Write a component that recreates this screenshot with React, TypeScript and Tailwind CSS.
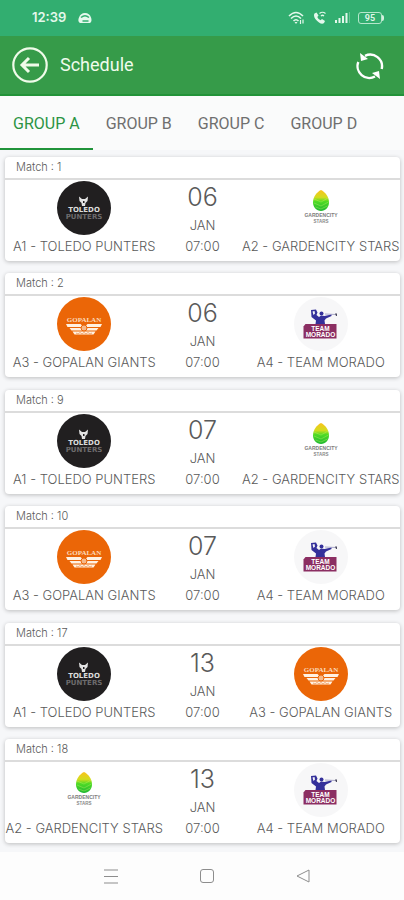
import { useState } from 'react';

type Team = 'toledo' | 'garden' | 'gopalan' | 'morado';

const teams: Record<Team, string> = {
  toledo: 'A1 - TOLEDO PUNTERS',
  garden: 'A2 - GARDENCITY STARS',
  gopalan: 'A3 - GOPALAN GIANTS',
  morado: 'A4 - TEAM MORADO',
};

const matches: { no: number; home: Team; away: Team; day: string }[] = [
  { no: 1, home: 'toledo', away: 'garden', day: '06' },
  { no: 2, home: 'gopalan', away: 'morado', day: '06' },
  { no: 9, home: 'toledo', away: 'garden', day: '07' },
  { no: 10, home: 'gopalan', away: 'morado', day: '07' },
  { no: 17, home: 'toledo', away: 'gopalan', day: '13' },
  { no: 18, home: 'garden', away: 'morado', day: '13' },
];

const groups = ['GROUP A', 'GROUP B', 'GROUP C', 'GROUP D'];

function ToledoLogo() {
  return (
    <svg className="size-[54px]" viewBox="0 0 54 54" aria-hidden="true">
      <circle cx="27" cy="27" r="27" fill="#211f20" />
      <path d="M22 15.500l3 2.500h3l3-2.500-.5 4.500-2 2-.5 3h-3l-.5-3-2-2z" fill="#e4e4e4" />
      <path d="M26 20h1.500v2H26z" fill="#211f20" />
      <text x="27" y="31" textAnchor="middle" fontSize="7" fontWeight="700" fontFamily="DejaVu Sans" fill="#dcdcdc">TOLEDO</text>
      <text x="27" y="38" textAnchor="middle" fontSize="7" fontWeight="700" fontFamily="DejaVu Sans" fill="#6d6b6c">PUNTERS</text>
    </svg>
  );
}

function GardenLogo() {
  return (
    <svg className="size-[54px]" viewBox="0 0 54 54" aria-hidden="true">
      <defs>
        <linearGradient id="leaf" x1="0" y1="0" x2="0" y2="1">
          <stop offset="0" stopColor="#fbc21c" />
          <stop offset=".35" stopColor="#d3dc1e" />
          <stop offset=".55" stopColor="#4fdb25" />
          <stop offset="1" stopColor="#1fb833" />
        </linearGradient>
      </defs>
      <path d="M27 9c4 2 8 6.500 8 12.500 0 4.500-3.500 8.500-8 8.500s-8-4-8-8.500C19 15.500 23 11 27 9z" fill="url(#leaf)" />
      <path d="M20 18l7 3 7-4M20 22l7 3 7.500-4M21.500 26l5.500 2 6.500-3" fill="none" stroke="#c9f56d" strokeWidth=".6" opacity=".6" />
      <text x="27" y="35.500" textAnchor="middle" fontSize="5" fontWeight="700" fontFamily="Liberation Sans" fill="#7d7d7d">GARDENCITY</text>
      <text x="27" y="42" textAnchor="middle" fontSize="4.500" fontWeight="700" fontFamily="Liberation Sans" fill="#888">STARS</text>
    </svg>
  );
}

function GopalanLogo() {
  return (
    <svg className="size-[54px]" viewBox="0 0 54 54" aria-hidden="true">
      <circle cx="27" cy="27" r="27" fill="#eb6607" />
      <text x="27" y="24.500" textAnchor="middle" fontSize="7" fontWeight="700" fontFamily="Liberation Serif" fill="#fbd9bb">GOPALAN</text>
      <path d="M9 27h14.500l1 1h5l1-1H45l-1.500 3H10.500zM12.500 31h29l-2 2.500h-25zM15.500 34.500h23l-2 3h-19z" fill="#fff1e2" />
      <circle cx="27" cy="31" r="3" fill="#f6b888" stroke="#eb6607" strokeWidth="1" />
      <path d="M19 36l2 1 2-1.500 2 1.500 2-1.500 2 1.500 2-1.500 2 1.500 2-1" fill="none" stroke="#eb8a45" strokeWidth=".7" />
    </svg>
  );
}

function MoradoLogo() {
  return (
    <svg className="size-[54px]" viewBox="0 0 54 54" aria-hidden="true">
      <circle cx="27" cy="27" r="27" fill="#f7f7f8" />
      <path d="M17 13l5-.5 1.500 3-1 2.500 2.500 2 2-1.500 3.500.5 7-1.500v1.500L32 21.500l-1.500 2 .5 3.500H21.500l.5-3.500-4.500-3.500z" fill="#34309a" />
      <path d="M18.500 14.500l2-.5.5 2.500-1.500 1.500z" fill="#f7f7f8" />
      <circle cx="27.500" cy="16.500" r="2" fill="#34309a" />
      <path d="M31 17l11 .5" stroke="#8886b4" strokeWidth=".7" />
      <path d="M41 16.500h2v2.500h-1z" fill="#4c4a5e" />
      <path d="M11.500 27h31v14.500h-33v-12z" fill="#8b2e62" />
      <text x="26.500" y="33.500" textAnchor="middle" fontSize="6.500" fontWeight="700" fontFamily="Liberation Sans" fill="#fff">TEAM</text>
      <text x="26.500" y="40" textAnchor="middle" fontSize="6.500" fontWeight="700" fontFamily="Liberation Sans" fill="#fff">MORADO</text>
    </svg>
  );
}

const logos = { toledo: ToledoLogo, garden: GardenLogo, gopalan: GopalanLogo, morado: MoradoLogo };

function TeamCell({ team }: { team: Team }) {
  const Logo = logos[team];
  return (
    <div className="flex flex-col items-center">
      <Logo />
      <span className="leading-[22px] whitespace-nowrap">{teams[team]}</span>
    </div>
  );
}

function StatusBar() {
  return (
    <div className="flex h-9 items-center justify-between bg-[#32ae70] pr-5 pl-8 text-[#e4f8ec]">
      <div className="flex items-center gap-3">
        <span className="font-['Inter',sans-serif] text-[13px] font-semibold">12:39</span>
        <svg width="14" height="12" viewBox="0 0 14 12" aria-hidden="true">
          <path d="M2 11C0 10 0 7.500 1 5.500 2 2.500 4 1 7 1s5 1.500 6 4.500c.8 2 .8 4.500-1 5.500z" fill="currentColor" />
          <path d="M3 5.500Q7 2 11 5.500M4.500 9h6" stroke="#32ae70" strokeWidth="1.500" fill="none" />
        </svg>
      </div>
      <div className="flex items-center gap-1">
        <svg width="17" height="14" viewBox="0 0 17 14" fill="none" stroke="currentColor" strokeWidth="1.600" aria-hidden="true">
          <path d="M1 5Q8 -2 15 5M3 7.500Q8 2.500 13 7.500M5.500 10Q8 7.500 10.500 10" />
          <path d="M6.500 11h3L8 13z" fill="currentColor" stroke="none" />
          <path d="M12.500 9v4M15 8.500v4" strokeWidth="1.200" />
        </svg>
        <svg className="ml-1" width="14" height="14" viewBox="0 0 14 14" aria-hidden="true">
          <path d="M1.500 2.500l2-1 2 3-1.200 1.500c.7 1.500 1.700 2.500 3.200 3.200L9 8l3 2-1 2c-1 1-3 1-5-.5C3 9.500 1 6.500 1 4.500c0-.8 0-1.500.5-2z" fill="currentColor" />
          <path d="M6.500 2.500Q9.500 0 12.500 2.500M8 5Q9.500 3.500 11 5" stroke="currentColor" strokeWidth="1.200" fill="none" />
        </svg>
        <svg className="ml-1" width="15" height="12" viewBox="0 0 15 12" fill="currentColor" aria-hidden="true">
          <path d="M0 8h2v3H0zM3.500 6h2v5h-2zM7 4h2v7H7zM10.500 1h2v10h-2z" />
          <path d="M14 0h1v11h-1z" opacity=".3" />
        </svg>
        <div className="ml-1 flex items-center">
          <span className="flex h-3 w-6 items-center justify-center rounded-[3px] border border-[#b5e6cb] text-[9px] leading-none font-semibold">95</span>
          <span className="h-1.5 w-0.5 rounded-r bg-[#d3f1e0]" />
        </div>
      </div>
    </div>
  );
}

export default function App() {
  const [group, setGroup] = useState('GROUP A');

  return (
    <div className="flex min-h-screen flex-col bg-[#f6f7f9] font-['Roboto','Liberation_Sans',sans-serif]">
      <StatusBar />
      <header className="flex h-[60px] items-center border-b-2 border-[#229339] bg-[#369b49] pr-5 pl-3 text-white">
        <button aria-label="Back">
          <svg width="36" height="36" viewBox="0 0 36 36" fill="none" stroke="#effbe9" aria-hidden="true">
            <circle cx="18" cy="18" r="16.700" strokeWidth="2.200" />
            <path d="M27 18H10M17 11l-7 7 7 7" strokeWidth="3" />
          </svg>
        </button>
        <h1 className="ml-3 flex-1 text-lg text-[#effbec]">Schedule</h1>
        <button aria-label="Refresh">
          <svg width="28" height="30" viewBox="0 0 28 30" fill="none" stroke="#fff" strokeWidth="2.400" aria-hidden="true">
            <path d="M9 5.800A11.800 11.800 0 0 1 25.700 19M19 26.500A11.800 11.800 0 0 1 2.300 12" />
            <path d="M4 3l1 8 7-2zM24 29l-1-8-7 2z" fill="#fff" stroke="none" />
          </svg>
        </button>
      </header>
      <nav className="flex h-[54px] bg-[#fafbfb]">
        {groups.map((g) => (
          <button
            key={g}
            onClick={() => setGroup(g)}
            className={
              g === group
                ? 'border-b-2 border-[#20943a] px-[13px] pt-1 text-base text-[#2b9444]'
                : 'border-b-2 border-transparent px-[13px] pt-1 text-base text-[#6f6f6f]'
            }>
            {g}
          </button>
        ))}
      </nav>
      <main className="flex flex-1 flex-col justify-between gap-2 pt-[7px] pr-1 pb-[9px] pl-[5px] font-['Inter',sans-serif] text-[13px] font-light text-[#5a5a5a]">
        {matches.map((m) => (
          <section key={m.no} className="rounded-sm bg-white pb-1 shadow-[0_1px_4px_#0000003d]">
            <h2 className="mb-px border-b-2 border-[#dcdcdc] pl-[11px] text-[11px] leading-[21px]">Match : {m.no}</h2>
            <div className="grid grid-cols-[1fr_78px_1fr]">
              <TeamCell team={m.home} />
              <div className="flex flex-col items-center">
                <span className="mb-0.5 text-[25px] leading-8">{m.day}</span>
                <span className="leading-5">JAN</span>
                <span className="leading-[22px]">07:00</span>
              </div>
              <TeamCell team={m.away} />
            </div>
          </section>
        ))}
      </main>
      <footer className="flex h-12 items-center justify-center gap-[82px] bg-[#fdfdfd] pl-2.5 text-[#8d8d8d]">
        <button aria-label="Recent apps">
          <svg width="14" height="15" viewBox="0 0 14 15" stroke="currentColor" aria-hidden="true">
            <path d="M0 1h14M0 7.500h14M0 14h14" />
          </svg>
        </button>
        <button aria-label="Home">
          <svg width="14" height="14" viewBox="0 0 14 14" fill="none" stroke="currentColor" aria-hidden="true">
            <rect x=".5" y=".5" width="13" height="13" rx="2.500" />
          </svg>
        </button>
        <button aria-label="Go back">
          <svg width="14" height="14" viewBox="0 0 14 14" fill="none" stroke="currentColor" strokeLinejoin="round" aria-hidden="true">
            <path d="M13 1v12L1 7z" />
          </svg>
        </button>
      </footer>
    </div>
  );
}
